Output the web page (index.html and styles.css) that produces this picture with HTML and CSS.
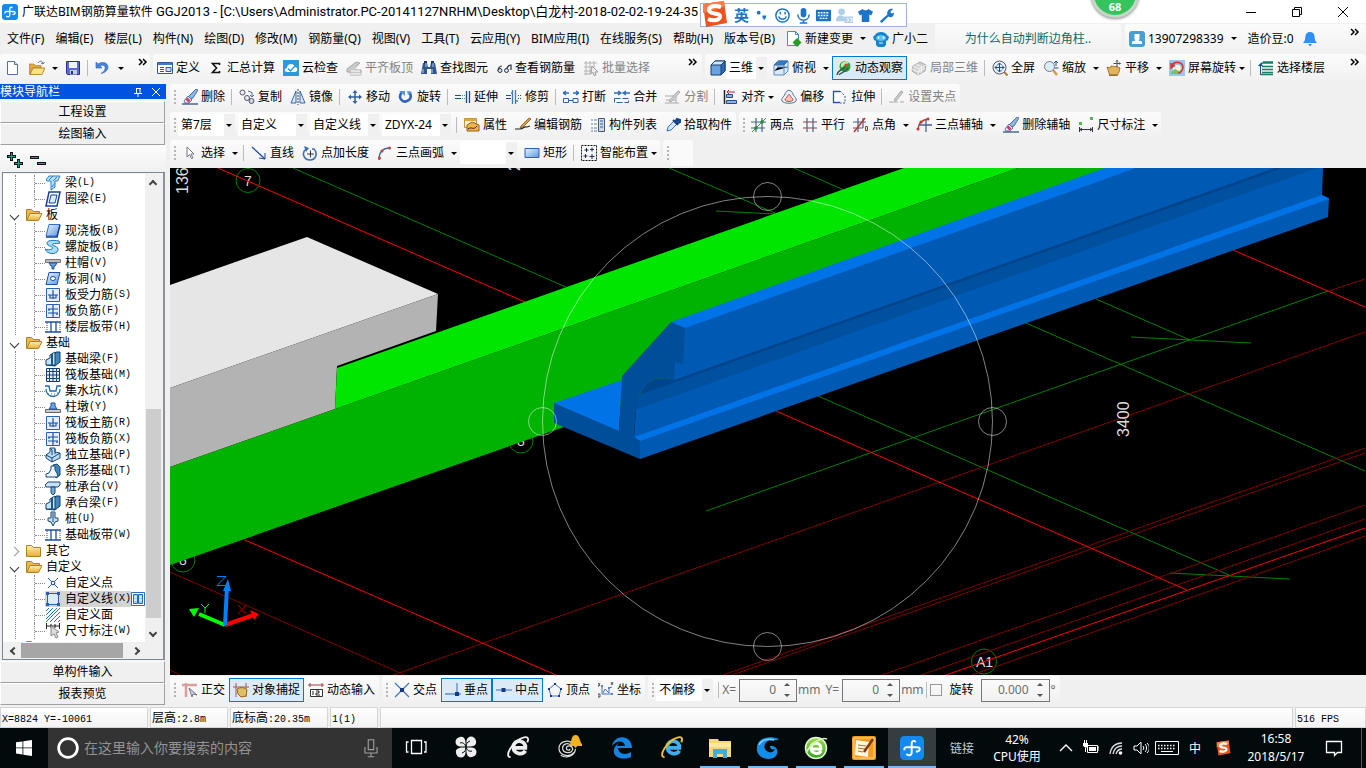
FILE: index.html
```html
<!DOCTYPE html>
<html lang="zh-CN">
<head>
<meta charset="utf-8">
<title>广联达BIM钢筋算量软件 GGJ2013</title>
<link rel="stylesheet" href="styles.css">
</head>
<body>
<svg class="defs" aria-hidden="true">
<defs>
<linearGradient id="gBlue" x1="0" y1="0" x2="1" y2="1"><stop offset="0" stop-color="#eaf6ff"/><stop offset="1" stop-color="#5f93e6"/></linearGradient>
<linearGradient id="gFold" x1="0" y1="0" x2="0" y2="1"><stop offset="0" stop-color="#fff0ae"/><stop offset="1" stop-color="#e6ac35"/></linearGradient>
<linearGradient id="gGreen" x1="0" y1="0" x2="0" y2="1"><stop offset="0" stop-color="#9be04a"/><stop offset="1" stop-color="#36a41c"/></linearGradient>
</defs>
<symbol id="app" viewBox="0 0 16 16"><rect width="16" height="16" rx="3" fill="#128af0"/><path d="M10.500 4C9 2.500 7.800 3.500 7.800 5v6c0 2-2.500 2.500-3.500 .800M3 9.500C2.500 8 3.500 7.500 4.500 7.500h7c2 0 2.300 2 .500 2.800M10.500 10.300h1.500" fill="none" stroke="#fff" stroke-width="1.300"/></symbol>
<symbol id="new" viewBox="0 0 16 16"><path d="M2.500 1.500h7l3 3v10h-10z" fill="#fff" stroke="#54719b"/><path d="M9.500 1.500v3h3" fill="#cfe0f5" stroke="#54719b"/></symbol>
<symbol id="open" viewBox="0 0 16 16"><path d="M0 4h5l1 1.500h6V8H3l-2 6H0z" fill="#e3aa3c" stroke="#a87416" stroke-width=".6"/><path d="M1 14.500L4 8h12l-3 6.500z" fill="#ffe08a" stroke="#a87416" stroke-width=".8"/><path d="M9 3c2-3 5-2 5 1M12 3l2 1 1.500-2" fill="none" stroke="#60718c"/></symbol>
<symbol id="save" viewBox="0 0 16 16"><path d="M1.500 1.500h13v13h-12l-1-1z" fill="#5d6ccb" stroke="#24318c"/><path d="M4 2h8v6H4z" fill="#eef2fd"/><path d="M5 10h7v4.500H5z" fill="#c5cbe0"/><path d="M6 11h2v3H6z" fill="#24318c"/></symbol>
<symbol id="undo" viewBox="0 0 16 16"><path d="M1 2v6h6L5 6c3-2 6 0 5 3-.500 2-2 3-4 4.500 5-1 7-4 7-6.500 0-4-5-6-10-3z" fill="#4a86d8" stroke="#2b5fae" stroke-width=".6"/></symbol>
<symbol id="define" viewBox="0 0 16 16"><path d="M.500 2.500h15v11H.500z" fill="#fff" stroke="#35599c"/><path d="M1 3h14v2H1z" fill="#4677c8"/><path d="M3 7.500h4M3 9.500h4M3 11.500h4M9 7.500h5v4H9z" stroke="#35599c" fill="#cddcf5"/></symbol>
<symbol id="sigma" viewBox="0 0 16 16"><path d="M11.500 5V3.500H4.500L8.500 8l-4 4.500h7V11" fill="none" stroke="#111" stroke-width="1.600"/></symbol>
<symbol id="cloud" viewBox="0 0 16 16"><rect width="16" height="16" fill="#2a9ada"/><path d="M4 12c-3 0-3-4 0-4 0-5 7-5 8-1 3 0 3 5 0 5z" fill="#fff"/><path d="M5 8.500l2.500 2.500L12 6" fill="none" stroke="#2a9ada" stroke-width="1.500"/></symbol>
<symbol id="flat" viewBox="0 0 16 16"><path d="M1 9l9-7 4 1-4 4v3h5v5H4v-3H1z" fill="#c9c9c9" stroke="#a9a9a9"/><path d="M3 14h12M5 11h9M9 8h6" stroke="#fff"/></symbol>
<symbol id="find" viewBox="0 0 16 16"><path d="M2 3h4l1 4h2l1-4h4l2 11h-6V9H6v5H0z" fill="#31568c"/><path d="M3 1h3v3H3zM10 1h3v3h-3z" fill="#1c3561"/><path d="M2 9v4M11 9v4M5 3v4M12 3v4" stroke="#b8d0f0"/></symbol>
<symbol id="glass" viewBox="0 0 16 16"><path d="M2 11c0-3 2-5 4-5M10 10c1-3 3-5 5-5v5" fill="none" stroke="#2d3340" stroke-width="1.200"/><circle cx="4" cy="10.500" r="2" fill="#d6e4f1" stroke="#2d3340"/><circle cx="10.500" cy="10.500" r="2" fill="#d6e4f1" stroke="#2d3340"/></symbol>
<symbol id="batch" viewBox="0 0 16 16"><path d="M1 3h13M1 7h9M1 11h7M1 14h6M3 1v14M7 1v14M11 1v7" stroke="#b3b3b3"/><path d="M9 6l6 6h-3l1 3-2 .500-1-3-2 1z" fill="#eee" stroke="#9d9d9d"/></symbol>
<symbol id="cube" viewBox="0 0 16 16"><path d="M1 5l4-4h10v10l-4 4H1z" fill="#6ba3de" stroke="#173f73"/><path d="M1 5l4-4h10l-4 4z" fill="#cfe6fb" stroke="#173f73"/><path d="M11 5l4-4v10l-4 4z" fill="#2d6cb0" stroke="#173f73"/></symbol>
<symbol id="cube2" viewBox="0 0 16 16"><path d="M1 5l4-4h10v10l-4 4H1z" fill="#d9ebfa" stroke="#5a8dc4"/><path d="M1 5l4-4h10l-4 4z" fill="#2e78c8" stroke="#3b6fa9"/><path d="M11 5v10M1 11l4-4h10M5 1v6" stroke="#5a8dc4"/></symbol>
<symbol id="orbit" viewBox="0 0 16 16"><circle cx="9" cy="6.500" r="5.500" fill="#2f9e3c"/><path d="M5 4c2-3 6-4 8-1-2 0-2 2-4 2s-1 3-4 2z" fill="#b7efb0"/><path d="M1 15c1-6 5-4 8-8M3 15c2-3 6-2 9-7" stroke="#3d4f4c" stroke-width="1.300" fill="none"/><circle cx="10" cy="5" r="1.500" fill="#e33"/></symbol>
<symbol id="local3d" viewBox="0 0 16 16"><path d="M2 6l7-4 6 3-1 6-7 4-6-4z" fill="#d0d0d0" stroke="#aaa"/><path d="M2 6l6 3 7-4M8 9l-1 6M5 4l6 3-1 6M1 9l6 3 7-4" stroke="#f5f5f5" fill="none"/></symbol>
<symbol id="full" viewBox="0 0 16 16"><circle cx="7.500" cy="7.500" r="6.500" fill="#e7f1fb" stroke="#557"/><path d="M3 7.500h9M7.500 3v9M5.500 5l2-2 2 2M5.500 10l2 2 2-2M5 5.500l-2 2 2 2M10 5.500l2 2-2 2" stroke="#1f4d92" fill="none"/><path d="M12 12l3.500 3.500" stroke="#b27a39" stroke-width="2"/></symbol>
<symbol id="zoomi" viewBox="0 0 16 16"><circle cx="6.500" cy="6.500" r="5" fill="#dcecf9" stroke="#778"/><path d="M10 10l4 5" stroke="#d39b49" stroke-width="2.500"/><path d="M13 1v5M11 3l2-2 2 2M11.500 8h4" stroke="#234f90" fill="none"/></symbol>
<symbol id="pan" viewBox="0 0 16 16"><path d="M1 7l3 1 1-2 7 1 2 1-1 4-2 4H4l-1-3z" fill="#e4b45c" stroke="#93621b" stroke-width=".8"/><path d="M3 15h8" stroke="#7b5417"/><path d="M11 0v7M7.500 3.500h7M10 1.500l1-1 1 1M13.500 2.500l1 1-1 1" stroke="#4b4f5a" fill="none"/></symbol>
<symbol id="srot" viewBox="0 0 16 16"><path d="M0 0h16v16H0z" fill="#94c9ee"/><path d="M4 5h6l2 3-2 4H4z" fill="#fbf6d8"/><path d="M2 12l4-3 4 2 2-1v4H2z" fill="#7cc05a"/><path d="M3 6c1-5 10-5 11 1 0 3-2 6-5 6M6 5L2 8V3" fill="none" stroke="#de3432" stroke-width="1.600"/></symbol>
<symbol id="floors" viewBox="0 0 16 16"><path d="M5 2h10M1 6l3-3h11M4 6.500h11M4 9.500h11M4 12.500h11M3 14.500h12" stroke="#1e7b68" stroke-width="1.500" fill="none"/><path d="M0 6h5L3 3z" fill="#264c8a"/><path d="M2.500 6v9" stroke="#264c8a"/></symbol>
<symbol id="brush" viewBox="0 0 16 16"><path d="M14 0l2 1-5 8-3 1-2-2z" fill="#8ab6e8" stroke="#345a92" stroke-width=".8"/><path d="M6 7l4 4-3 3H3L2 12z" fill="#f2e7ee" stroke="#345a92" stroke-width=".8"/><path d="M5.500 8.500l3 3-2 2-3-3z" fill="#c23f6b"/><path d="M0 15h16" stroke="#2f4f86" stroke-width="1.300"/></symbol>
<symbol id="copy" viewBox="0 0 16 16"><circle cx="3.500" cy="3.500" r="2.500" fill="#e9eef5" stroke="#556"/><circle cx="8" cy="9" r="2.500" fill="#e9eef5" stroke="#556"/><circle cx="12.500" cy="12" r="2.500" fill="#c8d5e6" stroke="#556"/><path d="M9 2l4 1.500v4M11 6l2 2 2-2" fill="none" stroke="#4d6b9c"/></symbol>
<symbol id="mirror" viewBox="0 0 16 16"><path d="M6 2v12H1zM10 2v12h5z" fill="#dce8f8" stroke="#3567ac"/><path d="M8 0v16" stroke="#345" stroke-dasharray="2 1"/></symbol>
<symbol id="move" viewBox="0 0 16 16"><path d="M2 8h12M8 2v12" stroke="#2f5f9d" stroke-width="1.500"/><path d="M8 1l2.500 3h-5zM8 15l2.500-3h-5zM1 8l3-2.500v5zM15 8l-3-2.500v5z" fill="#2f5f9d"/></symbol>
<symbol id="rotate" viewBox="0 0 16 16"><path d="M4 3c-5 6 1 11 5 9 4-1 5-6 2-9" fill="none" stroke="#2f65b4" stroke-width="2.600"/><path d="M1 2h6v5zM14 3l-5-1 1 4z" fill="#5c93dd"/></symbol>
<symbol id="extend" viewBox="0 0 16 16"><path d="M0 6.500h6M0 9.500h6" stroke="#234a84" stroke-width="1.200"/><path d="M7 6h1v1H7zM9 6h1v1H9zM7 9h1v1H7zM9 9h1v1H9z" fill="#3a6"/><path d="M11.500 2v12M14.500 2v12" stroke="#234a84" stroke-width="1.300"/></symbol>
<symbol id="trim" viewBox="0 0 16 16"><path d="M0 6.500h5M0 9.500h5M12 6.500h1M14 6.500h1M12 9.500h1M14 9.500h1" stroke="#234a84" stroke-width="1.200"/><path d="M6.500 1v14M9.500 1v14M5 4h2M10 12h2" stroke="#4779b8" stroke-width="1.300"/></symbol>
<symbol id="break" viewBox="0 0 16 16"><path d="M0 4h6M10 4h6M3 2L0 4l3 2M13 2l3 2-3 2" stroke="#2f6ab4" fill="none" stroke-width="1.300"/><path d="M.500 9.500h5v4h-5zM10 9.500h5v4h-5zM5 11.500h5" fill="#f3f7fc" stroke="#385f96"/></symbol>
<symbol id="merge" viewBox="0 0 16 16"><path d="M0 4h6M10 4h6M4 2l3 2-3 2M12 2L9 4l3 2" stroke="#2f6ab4" fill="none" stroke-width="1.300"/><path d="M.500 9.500h14v4H.500z" fill="#f3f7fc" stroke="#385f96" stroke-dasharray="6 2"/></symbol>
<symbol id="split" viewBox="0 0 16 16"><path d="M0 7h9M0 14h14M11 6v8M1 11h10" stroke="#aaa"/><path d="M4 12l9-10 2 1-9 10z" fill="#d0d0d0" stroke="#aaa"/></symbol>
<symbol id="align" viewBox="0 0 16 16"><path d="M2.500 1v14" stroke="#222" stroke-width="1.500"/><path d="M4.500 5.500h6v3h-6zM4.500 11.500h10v3h-10z" fill="#8db4e6" stroke="#244b91"/><path d="M5 3h8M7 1L5 3l2 2" stroke="#b32044" fill="none"/></symbol>
<symbol id="offset" viewBox="0 0 16 16"><path d="M1 12c-1-3 2-4 3-7 2-5 6-5 8 0 1 3 4 4 3 7-2 3-12 3-14 0z" fill="#eef3fa" stroke="#56719d"/><path d="M4 11c0-2 2-2 2.500-4 1-2 2-2 3 0 .500 2 2.500 2 2.500 4-1 2-7 2-8 0z" fill="#f4c6bd" stroke="#c54c40"/></symbol>
<symbol id="stretch" viewBox="0 0 16 16"><path d="M8 2.500H1.500v11H8" fill="#fff" stroke="#2c5797" stroke-width="1.300"/><path d="M8 2l5 5v7H8" fill="none" stroke="#2c5797" stroke-dasharray="2 1.500"/></symbol>
<symbol id="grippt" viewBox="0 0 16 16"><path d="M0 13h9M11 13h4M5 11l7-9 2 1-7 9z" stroke="#aaa" fill="#ccc"/></symbol>
<symbol id="prop" viewBox="0 0 16 16"><path d="M.500 1.500h12v9H.500z" fill="#fff3d4" stroke="#c9923d"/><path d="M1 2h11v2H1z" fill="#e4a43e"/><path d="M3 8l5-3 7 3v6H3z" fill="#f1b544" stroke="#925f15"/><path d="M4 12c4-3 5 2 9-3" stroke="#314" fill="none"/></symbol>
<symbol id="editbar" viewBox="0 0 16 16"><path d="M0 12h5c4 0 3-3 7-2l3-1" fill="none" stroke="#222" stroke-width="1.200"/><path d="M6 9l8-8 2 1-8 8-3 1z" fill="#d99a42" stroke="#7a4c12" stroke-width=".7"/></symbol>
<symbol id="list" viewBox="0 0 16 16"><path d="M1 3h2M4 3h3M1 7h2M4 7h3M1 11h2M4 11h3M1 14h2M4 14h3" stroke="#5a7fb5"/><path d="M8.500 1.500h6v13h-6z" fill="#c9daf2" stroke="#555"/><path d="M10 4h3M10 7h3M10 10h3" stroke="#2c5ca8"/></symbol>
<symbol id="pick" viewBox="0 0 16 16"><path d="M2 14l1-4 6-6 3 3-6 6z" fill="#d5e8fb" stroke="#3a6eb3"/><path d="M8 3l5 5M10 5l2-3 3 1v2l-3 2" stroke="#173f86" stroke-width="2" fill="#234f9d"/></symbol>
<symbol id="twopt" viewBox="0 0 16 16"><path d="M0 5h15M0 11h14M5 1v14M11 1v14" stroke="#47638c" stroke-width="1.200"/><path d="M1 15L15 1" stroke="#3f993b"/><circle cx="11" cy="5" r="1.700" fill="#1e8a2d"/><circle cx="5" cy="11" r="1.700" fill="#1e8a2d"/></symbol>
<symbol id="para" viewBox="0 0 16 16"><path d="M1 5h14M1 11h14" stroke="#993a41"/><path d="M5 1v14M11 1v14" stroke="#47638c" stroke-width="1.200"/></symbol>
<symbol id="angle" viewBox="0 0 16 16"><path d="M0 5h13M0 11h10M5 1v14M10 1v10" stroke="#47638c" stroke-width="1.200"/><path d="M1 15L12 1" stroke="#c43434" stroke-width="1.500"/><path d="M12.500 9.500h2v4h-2z" stroke="#d12020" fill="none"/></symbol>
<symbol id="axis3" viewBox="0 0 16 16"><path d="M2 13c0-6 3-10 10-11" fill="none" stroke="#c43434" stroke-width="1.300"/><path d="M3 8h13M10 3v12" stroke="#47638c" stroke-width="1.300"/><circle cx="2" cy="12" r="1.500" fill="#c43434"/><circle cx="5" cy="5" r="1.500" fill="#c43434"/><circle cx="12" cy="2" r="1.500" fill="#c43434"/></symbol>
<symbol id="dim" viewBox="0 0 16 16"><path d="M1 5h3v3H1zM12 0h3v3h-3z" fill="#55b355"/><path d="M1.500 10v5M14.500 10v5M2 12.500h12M4 11l-2 1.500L4 14M12 11l2 1.500-2 1.500" stroke="#334" fill="none"/></symbol>
<symbol id="cursor" viewBox="0 0 16 16"><path d="M5 2v10l2.500-2.500 2 4 1.500-.500-2-4h3z" fill="#fff" stroke="#778"/></symbol>
<symbol id="line" viewBox="0 0 16 16"><path d="M1 2l13 12" stroke="#1d4d9a" stroke-width="1.300"/><path d="M14 14l-6-1M14 14V8" stroke="#1d4d9a"/></symbol>
<symbol id="ptlen" viewBox="0 0 16 16"><path d="M4 4C-1 8 2 15 8 15s8-7 4-11h-2" fill="none" stroke="#3d6eaf" stroke-width="1.600"/><path d="M5 9h7M8.500 5.500v7" stroke="#334"/><path d="M2 1l5 2-3 4z" fill="#3d6eaf"/></symbol>
<symbol id="arc" viewBox="0 0 16 16"><path d="M2 15C2 7 6 3 13 3" fill="none" stroke="#3d6eaf" stroke-width="1.400"/><circle cx="2.500" cy="13" r="1.600" fill="#c74635"/><circle cx="5" cy="6" r="1.600" fill="#c74635"/><circle cx="12.500" cy="3" r="1.600" fill="#c74635"/></symbol>
<symbol id="rectm" viewBox="0 0 16 16"><path d="M1 3.500h14v9H1z" fill="url(#gBlue)" stroke="#2d5fc0"/></symbol>
<symbol id="smart" viewBox="0 0 16 16"><path d="M.500 .500h15v15H.500z" fill="none" stroke="#111" stroke-dasharray="2 1"/><path d="M5.500 3v4M3.500 5h4M11 2.500v4M9 4.500h4M4.500 9v4M2.500 11h4M11 9v5M8.500 11.500h5" stroke="#1f2d55"/></symbol>
<symbol id="ortho" viewBox="0 0 16 16"><path d="M0 3h15M4 1v14" stroke="#d9a09d" stroke-width="2.500"/><path d="M7 6l8 7-4-1-1 3z" fill="#c8d4e5" stroke="#778"/></symbol>
<symbol id="snap" viewBox="0 0 16 16"><path d="M0 5h16M3 1v14M13 1v14" stroke="#a55"/><path d="M4 7c3-2 8-2 10 1l-1 6-5 1-3-3z" fill="#e2bd62" stroke="#8b6a28"/></symbol>
<symbol id="dyn" viewBox="0 0 16 16"><path d="M0 3h16M2 1v4M14 1v4" stroke="#944"/><path d="M2.500 7.500h12v7h-12z" fill="#fff" stroke="#333"/><path d="M5 9v4M8 9h3v2H8v2h4" stroke="#222" fill="none"/></symbol>
<symbol id="cross" viewBox="0 0 16 16"><path d="M1 1l14 14M15 1L1 15" stroke="#3f73bf" stroke-width="1.200"/><path d="M6 6h4v4H6z" fill="#12398c"/></symbol>
<symbol id="perp" viewBox="0 0 16 16"><path d="M0 12h16M12 1v13" stroke="#5a8ccd" stroke-width="1.300"/><path d="M10 10h4v4h-4z" fill="#12398c"/></symbol>
<symbol id="mid" viewBox="0 0 16 16"><path d="M0 8h16" stroke="#5a8ccd" stroke-width="1.300"/><path d="M5.500 6h4v4h-4z" fill="#12398c"/></symbol>
<symbol id="vertex" viewBox="0 0 16 16"><path d="M8 2l6 5-2 7H4L2 7z" fill="none" stroke="#3f73bf"/><path d="M7 1h2v2H7zM13 6h2v2h-2zM1 6h2v2H1zM3 13h2v2H3zM11 13h2v2h-2z" fill="#12398c"/></symbol>
<symbol id="coord" viewBox="0 0 16 16"><path d="M4 4v8h10M5 11l2-4 4 4V6l3-1" stroke="#3f73bf" fill="none"/><path d="M3 3h2v2H3zM10 5h2v2h-2zM13 11h2v2h-2z" fill="#5b83c4"/><path d="M0 1l2 3M2 1L0 5M13 0l2 3M15 0l-2 3M0 12h2v3H0z" stroke="#333" stroke-width=".8" fill="none"/></symbol>
<symbol id="fold" viewBox="0 0 16 16"><path d="M.500 2.500h5l2 2h7v9H.500z" fill="url(#gFold)" stroke="#ae8222"/></symbol>
<symbol id="foldo" viewBox="0 0 16 16"><path d="M.500 13V2.500h5l2 2h6V7" fill="#e9b84d" stroke="#ae8222"/><path d="M.500 13.500L4 6.500h12l-3.500 7z" fill="url(#gFold)" stroke="#ae8222"/></symbol>
<symbol id="beam" viewBox="0 0 16 16"><path d="M1 5l3-4h11l-2 4v1h-3v6l-4 3V6H2z" fill="#b9e1fa" stroke="#2681c9"/><path d="M4 5l4-4M8 6l4-4M7 12l3-4" stroke="#2681c9"/></symbol>
<symbol id="ring" viewBox="0 0 16 16"><path d="M4 1h11l-3 14H1z" fill="#fff" stroke="#173f9b" stroke-width="1.500"/><path d="M6 4h6l-2 8H4z" fill="#dcecff" stroke="#173f9b"/></symbol>
<symbol id="slab" viewBox="0 0 16 16"><path d="M4 1.500h11L12 13H1z" fill="url(#gBlue)" stroke="#2e6fc5"/><path d="M1 14h11l3-12" fill="none" stroke="#173f9b" stroke-width="1.500"/></symbol>
<symbol id="spiral" viewBox="0 0 16 16"><path d="M14 2C4 0 0 3 3 6c3 2 6 2 4 4-2 1-5 1-7 0 3 7 14 5 13 0-1-4-8-3-5-5 1-1 5 0 7-1z" fill="#a6def8" stroke="#1b76b9"/></symbol>
<symbol id="cap" viewBox="0 0 16 16"><path d="M.500 4.500h15v3H.500z" fill="#bbb" stroke="#777"/><path d="M4 8h8l-2 3H9v3H7v-3H6z" fill="#6ea6e6" stroke="#1c4da0"/></symbol>
<symbol id="hole" viewBox="0 0 16 16"><path d="M4 1.500h11l-3 12H1z" fill="url(#gBlue)" stroke="#1d4da8"/><ellipse cx="8" cy="7.500" rx="2.500" ry="2" fill="#fff" stroke="#1d4da8"/></symbol>
<symbol id="bars" viewBox="0 0 16 16"><path d="M1.500 1.500h13v13h-13z" fill="#e5effd" stroke="#2b5eb8"/><path d="M3 8h10M8 3v9M5 8v3h6V8" stroke="#1d4da8" stroke-width="1.200" fill="none"/></symbol>
<symbol id="nbars" viewBox="0 0 16 16"><path d="M1.500 1.500h13v13h-13z" fill="#e5effd" stroke="#2b5eb8"/><path d="M3 6h10M3 10h10M8 2v12M4 6v2M12 10v2" stroke="#1d4da8" stroke-width="1.200"/></symbol>
<symbol id="strip" viewBox="0 0 16 16"><path d="M0 3h16M0 13h16" stroke="#1d4da8" stroke-width="1.300"/><path d="M6 3v10M11 3v10" stroke="#1d4da8" stroke-width="1.300"/><path d="M2 4v9M15 4v9" stroke="#446" stroke-dasharray="1 1"/></symbol>
<symbol id="fbeam" viewBox="0 0 16 16"><path d="M1 14l3-5 7-8h4v10l-5 4z" fill="#4087bd" stroke="#103c6f"/><path d="M1 14V9l4-2V4l5-3v13z" fill="#c5e5f9" stroke="#103c6f"/><path d="M7 3v11" stroke="#17598e" stroke-width="2"/></symbol>
<symbol id="raft" viewBox="0 0 16 16"><path d="M1.500 1.500h13v13h-13zM4.500 4.500h7v7h-7z" fill="#e8f1fc" stroke="#123d75"/><path d="M4.500 1v3M8 1v14M11.500 1v3M1 8h14M4.500 12v3M11.500 12v3M1 4.500h3M12 4.500h3M1 11.500h3M12 11.500h3" stroke="#123d75"/></symbol>
<symbol id="pit" viewBox="0 0 16 16"><path d="M0 3h4l1 5h6l1-5h4M1 6c0 10 14 10 14 0" fill="none" stroke="#1e67ad" stroke-width="1.300"/><path d="M3 11h1M6 11h1M9 11h1M12 10h1M5 13h1M9 13h1" stroke="#1e67ad"/></symbol>
<symbol id="pier" viewBox="0 0 16 16"><path d="M.500 10.500h15v3H.500z" fill="#ccc" stroke="#666"/><path d="M4 10l2-3V4h4v3l2 3z" fill="#6ea6e6" stroke="#1c4da0"/></symbol>
<symbol id="indep" viewBox="0 0 16 16"><path d="M1 8l4-3V1h5v4l5 1v5l-8 4-6-4z" fill="#b9dbf4" stroke="#184675"/><path d="M1 8l6 3 8-5M7 11v4M5 1l2 2v5M10 2v5" stroke="#184675" fill="none"/></symbol>
<symbol id="stripf" viewBox="0 0 16 16"><path d="M8 2l4-1 3 3v8l-4 3z" fill="#4087bd" stroke="#184675"/><path d="M1 14v-3l3-1 2-4V3h4v4l2 3 1 4z" fill="#eef7ff" stroke="#184675"/></symbol>
<symbol id="pcap" viewBox="0 0 16 16"><path d="M0 6l3-3h12v3l-2 2H1z" fill="#c7e2f8" stroke="#184675"/><path d="M6 8h4v6l-2 2-2-2z" fill="#72aad8" stroke="#184675"/></symbol>
<symbol id="pile" viewBox="0 0 16 16"><path d="M6 1h4v6h3v3l-3 1-2 4-2-4-3-1V7h3z" fill="#c7e2f8" stroke="#184675"/><path d="M8 2v9" stroke="#184675"/></symbol>
<symbol id="upoint" viewBox="0 0 16 16"><path d="M3 3l10 10M13 3L3 13" stroke="#2b68c5"/><circle cx="8" cy="8" r="1.800" fill="#fff" stroke="#14429a"/></symbol>
<symbol id="uline" viewBox="0 0 16 16"><path d="M2.500 2.500h11v11h-11z" fill="#dfe9f7" stroke="#2360b4"/><path d="M1 1h3v3H1zM12 1h3v3h-3zM1 12h3v3H1zM12 12h3v3h-3z" fill="#2360b4"/></symbol>
<symbol id="uface" viewBox="0 0 16 16"><path d="M1 4l3-3M1 8l7-7M1 12l11-11M1 15L15 1M5 15L15 5M9 15l6-6M13 15l2-2" stroke="#2371c4"/></symbol>
<symbol id="dimw" viewBox="0 0 16 16"><path d="M1.500 0v6M14.500 0v6M2 3h12M6 1v4M10 1v4" stroke="#222"/><path d="M6 3v10l3-2 2 4 2-1-2-4 3-1z" fill="#ddd" stroke="#888"/></symbol>
<symbol id="book" viewBox="0 0 14 16"><path d="M.500 1.500h13v13H.500z" fill="#fff" stroke="#2e6bb4"/><path d="M2.500 3.500h4v9h-4zM7.500 3.500h4v9h-4z" fill="#9cd5fa" stroke="#1670bd"/><path d="M3 6h3M3 9h3M8 6h3M8 9h3" stroke="#fff"/></symbol>
<symbol id="more" viewBox="0 0 10 8"><path d="M1 1l3 3-3 3M5 1l3 3-3 3" fill="none" stroke="#000" stroke-width="1.500"/></symbol>
<symbol id="change" viewBox="0 0 16 16"><path d="M1.500 .500h8l3 3v11h-11z" fill="#fff" stroke="#3e91bd"/><path d="M9.500 .500v3h3" fill="none" stroke="#3e91bd"/><path d="M11 7l4.500 4.500L11 16l-4.500-4.500z" fill="#2d9a28"/></symbol>
<symbol id="mascot" viewBox="0 0 16 16"><path d="M2 4c2-4 10-4 12 0l2 2-1 3-2 1v4l-2 2H5l-2-2v-4L1 9 0 6z" fill="#1684cc"/><ellipse cx="8" cy="7" rx="5" ry="3" fill="#5fc3f2"/><path d="M5.500 5.500v2M10.500 5.500v2" stroke="#fff" stroke-width="1.600"/><path d="M6 12h4" stroke="#9adcfa" stroke-width="1.400"/></symbol>
<symbol id="user" viewBox="0 0 16 16"><rect width="16" height="16" rx="3" fill="#4b9ed2"/><path d="M5.500 3h5v5l-1 1.500 3.500 1V13H3v-2.500l3.500-1-1-1.500z" fill="#fff"/></symbol>
<symbol id="bell" viewBox="0 0 16 16"><path d="M8 1c6 0 4 7 5.500 9l1.500 2H1l1.500-2C4 8 2 1 8 1zM6 13h4l-2 2.500z" fill="#2f90f5"/></symbol>
<symbol id="sogou" viewBox="0 0 28 28"><path d="M3 4L24 1l3 22-21 4z" fill="#f0511d"/><path d="M3 4L24 1l.500 6L3 13z" fill="#ff7a44"/><path d="M21 7c-6-2-12-1-12 3 0 5 12 2 11 7-1 4-8 4-12 2" fill="none" stroke="#fff" stroke-width="4"/></symbol>
<symbol id="ie" viewBox="0 0 26 26"><path d="M21 17c-3 5-13 4-13-4 0-9 14-8 13 1H9" fill="none" stroke="currentColor" stroke-width="4"/><path d="M5 24C-3 24 8 6 18 3c6-2 7 1 5 5" fill="none" stroke="var(--swoosh)" stroke-width="2"/></symbol>
</svg>

<header class="titlebar">
  <svg class="i"><use href="#app"/></svg>
  <h1>广联达BIM钢筋算量软件 <span>GGJ2013 - [C:\Users\Administrator.PC-20141127NRHM\Desktop\白龙村-2018-02-02-19-24-35</span></h1>
  <div class="winctl">
    <button aria-label="最小化"><svg viewBox="0 0 12 12"><path d="M1 6.500h10"/></svg></button>
    <button aria-label="还原"><svg viewBox="0 0 12 12"><path d="M1.500 3.500h7v7h-7zM3.500 3V1.500h7v7H9"/></svg></button>
    <button aria-label="关闭"><svg viewBox="0 0 12 12"><path d="M1 1l10 10M11 1L1 11"/></svg></button>
  </div>
  <div class="ime">
    <svg class="ime-logo"><use href="#sogou"/></svg>
    <b>英</b>
    <svg viewBox="0 0 18 18"><circle cx="6" cy="6" r="2"/><path d="M10 9h4c0 3-1 4-3 5 1-2 0-2-1-2z"/></svg>
    <svg viewBox="0 0 18 18"><circle cx="9" cy="9" r="7" fill="none" stroke="#1c74c6" stroke-width="1.600"/><path d="M6 5h1.500v3H6zM11 5h1.500v3H11z"/><path d="M5 10c1 4 7 4 8 0" fill="none" stroke="#1c74c6" stroke-width="1.500"/></svg>
    <svg viewBox="0 0 18 18"><rect x="6" y="1" width="6" height="10" rx="3"/><path d="M3 8c0 8 12 8 12 0M9 14v3M5 17h8" fill="none" stroke="#1c74c6" stroke-width="1.600"/></svg>
    <svg viewBox="0 0 18 18"><rect x="1" y="3" width="16" height="12" rx="1"/><path d="M3 6h12M3 9h12M5 12h8" stroke="#fff" stroke-dasharray="2 1" stroke-width="1.500"/></svg>
    <svg class="faded" viewBox="0 0 18 18"><circle cx="6" cy="5" r="3.500"/><path d="M0 15c0-7 7-7 9-4v4zM9 10h9v7H9z"/><path d="M11 12h2v3h-2M15 12h2v3h-2" stroke="#fff" fill="none"/></svg>
    <svg viewBox="0 0 18 18"><path d="M1 5l5-3c1 2 5 2 6 0l5 3-2 4-2-1v8H5V8L3 9z"/></svg>
    <svg viewBox="0 0 18 18"><path d="M2 15l8-7c-1-4 2-7 6-6l-3 3 1 2 3-1c0 4-3 6-6 4l-7 7z"/></svg>
  </div>
  <div class="ball">68</div>
</header>

<nav class="menubar">
  <button>文件(F)</button><button>编辑(E)</button><button>楼层(L)</button><button>构件(N)</button><button>绘图(D)</button><button>修改(M)</button><button>钢筋量(Q)</button><button>视图(V)</button><button>工具(T)</button><button>云应用(Y)</button><button>BIM应用(I)</button><button>在线服务(S)</button><button>帮助(H)</button><button>版本号(B)</button>
  <button class="it change"><svg class="i"><use href="#change"/></svg>新建变更<i class="dd wide"></i></button>
  <button class="it"><svg class="i"><use href="#mascot"/></svg>广小二</button>
  <div class="group tip"><a href="#tip">为什么自动判断边角柱..</a></div>
  <div class="group account">
    <button class="it"><svg class="i"><use href="#user"/></svg>13907298339<i class="dd wide"></i></button>
    <span>造价豆:0</span>
    <svg class="i"><use href="#bell"/></svg>
    <svg class="more"><use href="#more"/></svg>
  </div>
</nav>

<div class="row main-tools">
  <div class="group files">
    <button class="it" aria-label="新建"><svg class="i"><use href="#new"/></svg></button>
    <button class="it" aria-label="打开"><svg class="i"><use href="#open"/></svg><i class="dd wide"></i></button>
    <button class="it" aria-label="保存"><svg class="i"><use href="#save"/></svg></button>
    <i class="sep"></i>
    <button class="it" aria-label="撤销"><svg class="i"><use href="#undo"/></svg><i class="dd wide"></i></button>
    <svg class="more"><use href="#more"/></svg>
  </div>
  <div class="group general">
    <button class="it"><svg class="i"><use href="#define"/></svg>定义</button>
    <button class="it"><svg class="i"><use href="#sigma"/></svg>汇总计算</button>
    <button class="it"><svg class="i"><use href="#cloud"/></svg>云检查</button>
    <button class="it" disabled><svg class="i"><use href="#flat"/></svg>平齐板顶</button>
    <button class="it"><svg class="i"><use href="#find"/></svg>查找图元</button>
    <button class="it"><svg class="i"><use href="#glass"/></svg>查看钢筋量</button>
    <button class="it" disabled><svg class="i"><use href="#batch"/></svg>批量选择</button>
    <svg class="more"><use href="#more"/></svg>
  </div>
  <div class="group view">
    <svg class="i"><use href="#cube"/></svg>
    <label class="combo w3"><select aria-label="视图模式"><option>三维</option></select></label>
    <button class="it"><svg class="i"><use href="#cube2"/></svg>俯视<i class="dd wide"></i></button>
    <button class="it on"><svg class="i"><use href="#orbit"/></svg>动态观察</button>
    <button class="it" disabled><svg class="i"><use href="#local3d"/></svg>局部三维</button>
    <i class="sep"></i>
    <button class="it"><svg class="i"><use href="#full"/></svg>全屏</button>
    <button class="it"><svg class="i"><use href="#zoomi"/></svg>缩放<i class="dd wide"></i></button>
    <button class="it"><svg class="i"><use href="#pan"/></svg>平移<i class="dd wide"></i></button>
    <button class="it"><svg class="i"><use href="#srot"/></svg>屏幕旋转<i class="dd"></i></button>
    <i class="sep"></i>
    <button class="it"><svg class="i"><use href="#floors"/></svg>选择楼层</button>
    <svg class="more"><use href="#more"/></svg>
  </div>
</div>

<main class="work">
  <aside class="side">
    <h2>模块导航栏
      <svg viewBox="0 0 10 10"><path d="M3 1.500h5M3.500 1v5M7 1v5M1 6.500h8M5 7v3"/></svg>
      <svg viewBox="0 0 10 10"><path d="M1 1l8 8M9 1L1 9"/></svg>
    </h2>
    <button class="nav">工程设置</button>
    <button class="nav">绘图输入</button>
    <div class="treetools">
      <button aria-label="全部展开"><svg viewBox="0 0 16 16"><path d="M4.500 0v9M0 4.500h9M11.500 7v9M7 11.500h9" stroke="#111" stroke-width="3"/><path d="M4.500 1v7M1 4.500h7M11.500 8v7M8 11.500h7" stroke="#14a08c" stroke-width="1.200"/></svg></button>
      <button aria-label="全部折叠"><svg viewBox="0 0 16 16"><path d="M0 5.500h9M7 11.500h9" stroke="#111" stroke-width="3"/><path d="M1 5.500h7M8 11.500h7" stroke="#14a08c" stroke-width="1.200"/></svg></button>
    </div>
    <div class="treebox">
      <ul class="tree">
        <li><ul>
          <li><svg class="i"><use href="#beam"/></svg>梁<tt>(L)</tt></li>
          <li><svg class="i"><use href="#ring"/></svg>圈梁<tt>(E)</tt></li>
        </ul></li>
        <li><div class="node"><i class="exp open"></i><svg class="i"><use href="#foldo"/></svg>板</div><ul>
          <li><svg class="i"><use href="#slab"/></svg>现浇板<tt>(B)</tt></li>
          <li><svg class="i"><use href="#spiral"/></svg>螺旋板<tt>(B)</tt></li>
          <li><svg class="i"><use href="#cap"/></svg>柱帽<tt>(V)</tt></li>
          <li><svg class="i"><use href="#hole"/></svg>板洞<tt>(N)</tt></li>
          <li><svg class="i"><use href="#bars"/></svg>板受力筋<tt>(S)</tt></li>
          <li><svg class="i"><use href="#nbars"/></svg>板负筋<tt>(F)</tt></li>
          <li><svg class="i"><use href="#strip"/></svg>楼层板带<tt>(H)</tt></li>
        </ul></li>
        <li><div class="node"><i class="exp open"></i><svg class="i"><use href="#foldo"/></svg>基础</div><ul>
          <li><svg class="i"><use href="#fbeam"/></svg>基础梁<tt>(F)</tt></li>
          <li><svg class="i"><use href="#raft"/></svg>筏板基础<tt>(M)</tt></li>
          <li><svg class="i"><use href="#pit"/></svg>集水坑<tt>(K)</tt></li>
          <li><svg class="i"><use href="#pier"/></svg>柱墩<tt>(Y)</tt></li>
          <li><svg class="i"><use href="#bars"/></svg>筏板主筋<tt>(R)</tt></li>
          <li><svg class="i"><use href="#nbars"/></svg>筏板负筋<tt>(X)</tt></li>
          <li><svg class="i"><use href="#indep"/></svg>独立基础<tt>(P)</tt></li>
          <li><svg class="i"><use href="#stripf"/></svg>条形基础<tt>(T)</tt></li>
          <li><svg class="i"><use href="#pcap"/></svg>桩承台<tt>(V)</tt></li>
          <li><svg class="i"><use href="#fbeam"/></svg>承台梁<tt>(F)</tt></li>
          <li><svg class="i"><use href="#pile"/></svg>桩<tt>(U)</tt></li>
          <li><svg class="i"><use href="#strip"/></svg>基础板带<tt>(W)</tt></li>
        </ul></li>
        <li><div class="node"><i class="exp"></i><svg class="i"><use href="#fold"/></svg>其它</div></li>
        <li><div class="node"><i class="exp open"></i><svg class="i"><use href="#foldo"/></svg>自定义</div><ul>
          <li><svg class="i"><use href="#upoint"/></svg>自定义点</li>
          <li class="sel"><span><svg class="i"><use href="#uline"/></svg>自定义线<tt>(X)</tt></span><svg class="i book"><use href="#book"/></svg></li>
          <li><svg class="i"><use href="#uface"/></svg>自定义面</li>
          <li><svg class="i"><use href="#dimw"/></svg>尺寸标注<tt>(W)</tt></li>
        </ul></li>
        <li><div class="node"><i class="exp"></i><svg class="i"><use href="#fold"/></svg></div></li>
      </ul>
      <div class="vbar"><i class="up"></i><b></b><i class="down"></i></div>
      <div class="hbar"><i class="left"></i><b></b><i class="right"></i></div>
    </div>
    <button class="nav">单构件输入</button>
    <button class="nav">报表预览</button>
  </aside>

  <section class="stage">
    <div class="bars">
      <div class="row">
        <div class="group"><i class="grip"></i>
          <button class="it"><svg class="i"><use href="#brush"/></svg>删除</button><i class="sep"></i>
          <button class="it"><svg class="i"><use href="#copy"/></svg>复制</button>
          <button class="it"><svg class="i"><use href="#mirror"/></svg>镜像</button><i class="sep"></i>
          <button class="it"><svg class="i"><use href="#move"/></svg>移动</button>
          <button class="it"><svg class="i"><use href="#rotate"/></svg>旋转</button><i class="sep"></i>
          <button class="it"><svg class="i"><use href="#extend"/></svg>延伸</button>
          <button class="it"><svg class="i"><use href="#trim"/></svg>修剪</button><i class="sep"></i>
          <button class="it"><svg class="i"><use href="#break"/></svg>打断</button>
          <button class="it"><svg class="i"><use href="#merge"/></svg>合并</button>
          <button class="it" disabled><svg class="i"><use href="#split"/></svg>分割</button><i class="sep"></i>
          <button class="it"><svg class="i"><use href="#align"/></svg>对齐<i class="dd"></i></button>
          <button class="it"><svg class="i"><use href="#offset"/></svg>偏移</button>
          <button class="it"><svg class="i"><use href="#stretch"/></svg>拉伸</button><i class="sep"></i>
          <button class="it" disabled><svg class="i"><use href="#grippt"/></svg>设置夹点</button>
        </div>
      </div>
      <div class="row">
        <div class="group"><i class="grip"></i>
          <label class="combo w1"><select aria-label="楼层"><option>第7层</option></select></label>
          <label class="combo w2"><select aria-label="构件类别"><option>自定义</option></select></label>
          <label class="combo w2"><select aria-label="构件类型"><option>自定义线</option></select></label>
          <label class="combo w2"><select aria-label="构件名称"><option>ZDYX-24</option></select></label>
          <i class="sep"></i>
          <button class="it"><svg class="i"><use href="#prop"/></svg>属性</button>
          <button class="it"><svg class="i"><use href="#editbar"/></svg>编辑钢筋</button>
          <button class="it"><svg class="i"><use href="#list"/></svg>构件列表</button>
          <button class="it"><svg class="i"><use href="#pick"/></svg>拾取构件</button>
        </div>
        <div class="group"><i class="grip"></i>
          <button class="it"><svg class="i"><use href="#twopt"/></svg>两点</button>
          <button class="it"><svg class="i"><use href="#para"/></svg>平行</button>
          <button class="it"><svg class="i"><use href="#angle"/></svg>点角<i class="dd wide"></i></button>
          <button class="it"><svg class="i"><use href="#axis3"/></svg>三点辅轴<i class="dd wide"></i></button>
          <button class="it"><svg class="i"><use href="#brush"/></svg>删除辅轴</button>
          <button class="it"><svg class="i"><use href="#dim"/></svg>尺寸标注<i class="dd wide"></i></button>
        </div>
      </div>
      <div class="row">
        <div class="group"><i class="grip"></i>
          <button class="it"><svg class="i"><use href="#cursor"/></svg>选择<i class="dd wide"></i></button><i class="sep"></i>
          <button class="it"><svg class="i"><use href="#line"/></svg>直线</button>
          <button class="it"><svg class="i"><use href="#ptlen"/></svg>点加长度</button>
          <button class="it"><svg class="i"><use href="#arc"/></svg>三点画弧<i class="dd wide"></i></button>
          <label class="combo w1"><select aria-label="画弧方式"><option></option></select></label>
          <button class="it"><svg class="i"><use href="#rectm"/></svg>矩形</button><i class="sep"></i>
          <button class="it"><svg class="i"><use href="#smart"/></svg>智能布置<i class="dd"></i></button>
        </div>
        <div class="group"><i class="grip"></i><span class="blank"></span></div>
      </div>
    </div>

    <svg class="canvas" viewBox="170 168 1196 507" preserveAspectRatio="xMinYMin slice" role="img" aria-label="三维视图">
      <g fill="none" stroke="#008000">
        <path d="M293 168L566 287M669 168l106 45M716 211l59 3M794 168l50 22M1328 291L706 511M1096 299l94 41M1131 337l120 6M1026 323l339 148M818 396l411 179M1170 573l120 6"/>
        <circle cx="248" cy="180.500" r="12"/><circle cx="521" cy="441" r="12"/><circle cx="183" cy="560" r="12"/><circle cx="984" cy="661.500" r="12.500"/>
      </g>
      <path d="M170 572l235 103M170 670l10 5M393 675L1365 332M723 675L1365 448M732 675L1365 453M882 675L1365 505M921 675L1365 519M972 675L1365 536M1329 291l36-12" fill="none" stroke="#800000"/>
      <g class="cadtext">
        <text x="244" y="186" class="small">7</text>
        <text x="517" y="446" class="small">8</text>
        <text x="179" y="565" class="small">8</text>
        <text x="976" y="667" class="small">A1</text>
        <text transform="translate(188 194) rotate(-90)">136</text>
        <text transform="translate(1129 437) rotate(-90)">3400</text>
        <text transform="translate(520 171) rotate(-90)">2</text>
      </g>
      <path d="M218 168L525 302M776 411l411 179M245 540l311 135M946 675L1365 528M1233 250l132 57" fill="none" stroke="#f00"/>
      <path d="M170 285L307 237l131 57L170 388z" fill="#e6e6e6"/>
      <path d="M170 388l268-94-2 37-99 35-2 43-165 58z" fill="#b3b3b3"/>
      <path d="M337 368L904 168h114L335 409z" fill="#00e600"/>
      <path d="M170 467l165-58L1018 168h90L600 417l-36 10L170 565z" fill="#00b300"/>
      <path d="M677 326L1137 168h186l-1 27 7 3-1 19L640 459l-6-22 2-28 10-26 26-4z" fill="#005ab3"/>
      <path d="M639 395L1283 168h34L635 410z" fill="#0050a0"/>
      <path d="M639 395l8-12 8-4 10-1 9 2L1275 168h8z" fill="#00458a"/>
      <path d="M671 322L1105 168h32L685 328zM634 437L1322 195l7 4L640 441zM554 403l68-23-3 52z" fill="#0073e6"/>
      <path d="M671 322l14 6-2 36-8-2-1 18-9-2-10 1-8 4-8 12-3 15-2 27 6 4v18l-86-36v-20l65 28 3-55z" fill="#004d99"/>
      <g fill="none" stroke="#fff" stroke-opacity=".5">
        <circle cx="767.500" cy="421.500" r="225"/><circle cx="542.500" cy="421.500" r="14"/><circle cx="767.500" cy="196.500" r="14"/><circle cx="992.500" cy="421.500" r="14"/><circle cx="767.500" cy="646.500" r="14"/>
      </g>
      <path d="M225 625l29-10" stroke="#f00" stroke-width="4"/><path d="M250 610l9 4-5 6z" fill="#f00"/>
      <path d="M225 625l-26-11" stroke="#0f0" stroke-width="4"/><path d="M199 608l-10 1 5 8z" fill="#0f0"/>
      <path d="M225 625l2-38" stroke="#0080ff" stroke-width="4"/><path d="M223 591l5-12 3 12z" fill="#0080ff"/>
      <path d="M238 605l8 9M246 605l-8 9" stroke="#a00000"/><path d="M201 604l4 4 4-4M205 608v5" stroke="#0f0" fill="none"/><path d="M217 576.500h9l-9 9h9" stroke="#0080ff" fill="none"/>
    </svg>

    <div class="row snaps">
      <div class="group"><i class="grip"></i>
        <button class="it"><svg class="i"><use href="#ortho"/></svg>正交</button>
        <button class="it on"><svg class="i"><use href="#snap"/></svg>对象捕捉</button>
        <button class="it"><svg class="i"><use href="#dyn"/></svg>动态输入</button>
      </div>
      <div class="group"><i class="grip"></i>
        <button class="it"><svg class="i"><use href="#cross"/></svg>交点</button>
        <button class="it on"><svg class="i"><use href="#perp"/></svg>垂点</button>
        <button class="it on"><svg class="i"><use href="#mid"/></svg>中点</button>
        <button class="it"><svg class="i"><use href="#vertex"/></svg>顶点</button>
        <button class="it"><svg class="i"><use href="#coord"/></svg>坐标</button>
      </div>
      <div class="group offs"><i class="grip"></i>
        <label class="combo w1"><select aria-label="偏移方式"><option>不偏移</option></select></label>
        <i class="sep"></i>
        <label for="ox">X=</label><span class="spin"><input id="ox" value="0"><i></i></span><span>mm</span>
        <label for="oy" class="second">Y=</label><span class="spin"><input id="oy" value="0"><i></i></span><span>mm</span>
        <i class="sep"></i>
        <input type="checkbox" id="rot"><label for="rot" class="dark">旋转</label>
        <span class="spin big"><input aria-label="旋转角度" value="0.000"><i></i></span><span>°</span>
      </div>
    </div>
  </section>
</main>

<footer class="status">
  <span class="c1"><tt>X=8824 Y=-10061</tt></span><span class="c2">层高<tt>:2.8m</tt></span><span class="c3">底标高<tt>:20.35m</tt></span><span class="c4"><tt>1(1)</tt></span><span class="c5"></span><span class="c6"><tt>516 FPS</tt></span>
</footer>

<footer class="taskbar">
  <button class="start" aria-label="开始"><svg viewBox="0 0 16 16"><path d="M0 2.300L6.500 1.400v6.100H0zM7.300 1.300L16 0v7.500H7.300zM0 8.300h6.500v6.200L0 13.600zM7.300 8.300H16V16l-8.700-1.300z" fill="#fff"/></svg></button>
  <div class="search">
    <svg viewBox="0 0 20 20"><circle cx="10" cy="10" r="8.500" fill="none" stroke="#fff" stroke-width="2.500"/></svg>
    <input aria-label="搜索" placeholder="在这里输入你要搜索的内容">
    <svg viewBox="0 0 20 20"><path d="M7.500 2.500h5v9h-5zM4.500 9v5.500h11V9M10 15v3M7 18h6" fill="none" stroke="#a0a0a0"/></svg>
  </div>
  <button class="task" aria-label="任务视图"><svg viewBox="0 0 24 24"><path d="M7.500 5.500h10v13h-10zM4.500 7H2.500v10h2M20 7h2v10h-2" fill="none" stroke="#fff" stroke-width="1.300"/></svg></button>
  <button class="task mid" aria-label="扇形图标"><svg viewBox="0 0 24 24"><path d="M11.500 11.500H6C0 11 0 3 6 2c5-1 6 4 5.500 9.500zM12.500 11.500V6c.500-6 8.500-6 9.500 0 1 5-4 6-9.500 5.500zM12.500 12.500H18c6 .500 6 8.500 0 9.500-5 1-6-4-5.500-9.500zM11.500 12.500V18c-.500 6-8.500 6-9.500 0-1-5 4-6 9.500-5.500z" fill="#eee"/><path d="M6 8c3-1 5 1 6 4 0-3 1-5 4-6M18 16c-3 1-5-1-6-4 0 3-1 5-4 6" stroke="#081010" fill="none"/></svg></button>
  <button class="task mid ie-white" aria-label="浏览器"><svg><use href="#ie"/></svg></button>
  <button class="task mid" aria-label="消息"><svg viewBox="0 0 26 26"><path d="M17 11C13 4 2 6 1 14c0 8 11 11 16 5M15 12c-4-5-10-2-10 2 0 6 10 7 11 1-1-4-6-4-7-1 0 3 4 3 4 1M3 22c6 4 15 1 16-7" fill="none" stroke="#ddd" stroke-width="1.300"/><path d="M19 0c5 0 4 7 7 10v2H13v-2c2-3 1-10 6-10zM17 12h4l-2 2z" fill="#f0b41e"/></svg></button>
  <button class="task mid" aria-label="Edge"><svg viewBox="0 0 24 24"><path d="M2 11C4-1 22-1 22 13H8c1 7 8 7 13 4v5C12 26 2 22 4 14c1-3 3-5 5-6-1 1-2 2-2 3h8C14 4 5 6 2 11z" fill="#1683e2"/></svg></button>
  <button class="task ie-blue" aria-label="Internet Explorer"><svg><use href="#ie"/></svg></button>
  <button class="task run" aria-label="文件资源管理器"><svg viewBox="0 0 24 24"><path d="M1 3h9l1 2h12v16H1z" fill="#f7d676"/><path d="M1 7h22v4H1z" fill="#ffe9a2"/><path d="M5 13h14v9h-4v-4H9v4H5z" fill="#3aaee6"/></svg></button>
  <button class="task run" aria-label="G浏览器"><svg viewBox="0 0 24 24"><path d="M23 3c-3 3-11-1-14 5-3 7 7 12 10 5-3 1-5 0-5-3 7-1 10 6 5 11-7 5-20 0-18-10C2 2 13-1 23 3z" fill="#148de8"/><path d="M3 9c2-5 10-7 15-5" stroke="#7bd0ff" stroke-width="1.500" fill="none"/></svg></button>
  <button class="task run" aria-label="360浏览器"><svg viewBox="0 0 24 24"><circle cx="12" cy="12" r="10.500" fill="url(#gGreen)" stroke="#e7f6df" stroke-width="1.500"/><path d="M17 15c-2 4-10 3-10-3 0-7 11-6 10 1H8" fill="none" stroke="#fff" stroke-width="3"/><path d="M2 17C7 7 17 1 23 3" stroke="#d5f2b4" stroke-width="1.500" fill="none"/></svg></button>
  <button class="task run" aria-label="便笺"><svg viewBox="0 0 24 24"><rect width="24" height="24" rx="2" fill="#f79a1b"/><path d="M2 2h20v20H2z" fill="none" stroke="#ffd88a"/><path d="M4 4l13 2-1 15-13-2z" fill="#fff7dc"/><path d="M6 9l8 1M6 12l7 1M6 15l5 1" stroke="#bb6c24"/><path d="M21 3l-9 13" stroke="#7d3715" stroke-width="2.500"/></svg></button>
  <button class="task run active" aria-label="广联达"><svg><use href="#app"/></svg></button>
  <div class="tray">
    <span class="link">链接</span>
    <span class="cpu">42%<br>CPU使用</span>
    <span class="t"><svg viewBox="0 0 16 16"><path d="M2 11l6-6 6 6" fill="none" stroke="#fff" stroke-width="1.400"/></svg></span>
    <span class="t"><svg viewBox="0 0 16 16"><path d="M4.500 5.500h10v7h-10zM15 7h1v4" fill="none" stroke="#fff"/><path d="M6 7h7v4H6zM0 3h5v3L3 8 0 6zM1 0h1v3H1zM3 0h1v3H3zM2 8h1v4H2z" fill="#fff"/></svg></span>
    <span class="t"><svg viewBox="0 0 16 16"><path d="M2 14C3 7 7 3 14 3M5 14c1-5 4-8 9-8M8 14c1-3 3-5 6-5" fill="none" stroke="#ddd" stroke-width="1.300"/><circle cx="12.500" cy="13" r="1.800" fill="#fff"/></svg></span>
    <span class="t"><svg viewBox="0 0 16 16"><path d="M1 6h3l4-4v12l-4-4H1zM10 6c1 1 1 3 0 4M12 4c2 2 2 6 0 8M14 3c3 3 3 7 0 10" fill="none" stroke="#fff"/></svg></span>
    <span class="t kb"><svg viewBox="0 0 24 14"><path d="M.500 .500h23v13H.500z" fill="none" stroke="#fff"/><path d="M3 4.500h18M3 7.500h18" stroke="#fff" stroke-width="1.500" stroke-dasharray="1.500 1.500"/><path d="M6 10.500h12" stroke="#fff"/></svg></span>
    <span class="t kb zh">中</span>
    <span class="t kb"><svg class="i"><use href="#sogou"/></svg></span>
    <time>16:58<br>2018/5/17</time>
    <button class="notice" aria-label="通知"><svg viewBox="0 0 18 18"><path d="M1.500 2.500h15v11h-4l-3 3v-3h-8z" fill="none" stroke="#fff" stroke-width="1.300"/></svg></button>
    <i class="desk"></i>
  </div>
</footer>
</body>
</html>
```
FILE: styles.css
```css
* { box-sizing: border-box; }
html, body { height: 100%; }
body {
  margin: 0;
  display: flex;
  flex-direction: column;
  overflow: hidden;
  background: #f0f0f0;
  color: #000;
  font: 12px/16px "Noto Sans", "Noto Sans CJK SC", sans-serif;
}
button, select, input { font: inherit; color: inherit; }
button { border: 0; background: none; padding: 0; white-space: nowrap; }
ul { list-style: none; margin: 0; padding: 0; }
tt { font: 10px/16px "Liberation Mono", monospace; }
svg { display: block; flex: none; }
.defs { position: absolute; width: 0; height: 0; }
.i { width: 16px; height: 16px; }

/* title bar */
.titlebar { position: relative; z-index: 2; height: 23px; flex: none; display: flex; align-items: center; padding-left: 2px; gap: 4px; background: #fff; }
.titlebar h1 { margin: 0; font-size: 12px; font-weight: 400; white-space: nowrap; }
.titlebar h1 span { font: 13px/16px Roboto, "Noto Sans CJK SC", sans-serif; }
.winctl { margin-left: auto; display: flex; }
.winctl button { width: 46px; height: 20px; display: grid; place-items: center; }
.winctl svg { width: 12px; height: 12px; fill: none; stroke: #000; }
.ime { position: absolute; left: 700px; top: 3px; width: 207px; height: 24px; padding: 0 11px 0 33px; display: flex; align-items: center; justify-content: space-between; border: 1px solid #9ab7dc; background: #fff; color: #1c74c6; }
.ime b { font-size: 15px; }
.ime svg { width: 17px; height: 17px; fill: #1c74c6; }
.ime .faded { opacity: .35; }
.ime .ime-logo { position: absolute; left: -1px; top: -4px; width: 28px; height: 28px; }
.ball { position: absolute; left: 1091px; top: -30px; width: 48px; height: 48px; padding-top: 26px; border: 3px solid #c5d6c8; border-radius: 50%; background: #35c45c; box-shadow: 0 1px 3px #888; color: #fff; font-size: 11px; font-weight: 700; line-height: 15px; text-align: center; }

/* menu and tool rows */
.menubar { height: 31px; flex: none; display: flex; align-items: center; }
.menubar > button { padding: 0 5px 0 6px; }
.menubar > button:first-child { padding-left: 7px; }
.row { display: flex; gap: 3px; height: 26px; flex: none; }
.group { display: flex; align-items: center; min-width: 0; border-radius: 3px; background: linear-gradient(#fcfcfc, #f0f0f0); }
.it, .menubar > .it { display: flex; align-items: center; gap: 3px; height: 24px; padding: 0 4px; }
.menubar > .change { padding-left: 6px; }
.it:disabled { color: #838383; }
.on { background: #dceaf6; box-shadow: inset 0 0 0 1px #0078d7; }
.dd { flex: none; width: 6px; height: 0; margin-right: -1px; border: solid transparent; border-width: 3px 3px 0; border-top-color: #000; }
.dd.wide { margin-left: 4px; }
.sep { flex: none; width: 6px; height: 16px; background: linear-gradient(#bbb, #bbb) 2px 0 / 1px 100% no-repeat; }
.more { width: 10px; height: 8px; margin: 4px 6px 0 auto; align-self: flex-start; }
.grip { flex: none; width: 8px; height: 14px; background: repeating-linear-gradient(#b5b5b5 0 2px, transparent 2px 4px) 4px 0 / 2px 100% no-repeat; }
.tip { flex: 1; height: 30px; margin-left: 3px; justify-content: center; }
.tip a { color: #0b6a6a; text-decoration: none; white-space: nowrap; }
.account { width: 241px; height: 30px; gap: 8px; margin-left: 4px; }
.main-tools { height: 28px; margin-bottom: 2px; }
.files { width: 150px; padding-left: 1px; }
.files .more { margin-right: 2px; }
.general { width: 549px; }
.general .more { margin-right: 4px; }
.view { flex: 1; padding-left: 5px; }
.combo { display: grid; height: 22px; background: linear-gradient(#f0f0f0, #f0f0f0) right / 11px 100% no-repeat #fff; margin-right: 3px; }
.combo select { grid-area: 1 / 1; width: 100%; min-width: 0; border: 0; padding: 0 12px 0 3px; background: none; appearance: none; }
.combo::after { content: ""; grid-area: 1 / 1; place-self: center end; margin-right: 3px; border: solid transparent; border-width: 3px 3px 0; border-top-color: #000; pointer-events: none; }
.w1 { width: 57px; }
.w2 { width: 69px; }
.w3 { width: 41px; margin-right: 2px; }
.blank { width: 22px; height: 26px; background: #fafafa; }

/* work area */
.work { flex: 1; min-height: 0; display: grid; grid-template-columns: 166px minmax(0, 1fr); gap: 4px; }
.side { display: flex; flex-direction: column; min-height: 0; padding-bottom: 2px; }
.side h2 { display: flex; align-items: center; gap: 8px; height: 15px; margin: 0 0 2px; padding-right: 5px; background: #0052e0; color: #fff; font-size: 12px; font-weight: 400; }
.side h2 svg { width: 10px; height: 10px; fill: none; stroke: #fff; }
.side h2 svg:first-child { margin-left: auto; }
.nav { flex: none; height: 22px; width: 165px; border: 1px solid #a0a0a0; border-color: #fff #a0a0a0 #a0a0a0 #fff; background: #f0f0f0; }
.treetools { display: flex; align-items: center; gap: 7px; height: 27px; padding: 3px 0 0 7px; background: linear-gradient(#fcfcfc, #f0f0f0); }
.treetools svg { width: 16px; height: 16px; }
.treebox { flex: 1; min-height: 0; width: 163px; margin: 0 0 1px 2px; padding: 1px 2px 0 0; border: 1px solid #7f8793; border-right: 2px solid #8b929c; background: #f0f0f0; display: grid; grid-template: minmax(0, 1fr) 17px / minmax(0, 1fr) 16px; }
.tree { overflow: hidden; padding-top: 1px; background: #fff; white-space: nowrap; }
.tree ul { margin-left: 12px; border-left: 1px dotted #888; }
.tree ul li { display: flex; align-items: center; height: 16px; margin-left: 18px; border-left: 1px dotted #888; }
.tree ul li::before { content: ""; width: 10px; border-top: 1px dotted #888; }
.tree .i { margin-right: 4px; }
.node { display: flex; align-items: center; height: 16px; }
.exp { flex: none; width: 7px; height: 7px; margin: 0 8px; border: solid #999; border-width: 1px 1px 0 0; transform: rotate(45deg); }
.exp.open { border-color: #333; border-width: 0 1px 1px 0; }
.sel span { display: flex; align-items: center; background: #d4d4d4; }
.tree .book { width: 14px; margin: 0; }
.vbar, .hbar { display: flex; align-items: center; justify-content: space-between; }
.vbar { flex-direction: column; padding: 7px 0 6px; }
.vbar b { width: 15px; height: 209px; margin: auto 0 12px; background: #cdcdcd; }
.hbar { padding: 0 4px 0 8px; }
.hbar b { width: 102px; height: 15px; margin-right: auto; margin-left: 4px; background: #a6a6a6; }
.vbar i, .hbar i { width: 6px; height: 6px; border: solid #444; border-width: 2px 0 0 2px; }
.vbar .up { transform: rotate(45deg); }
.vbar .down { transform: rotate(225deg); }
.hbar .left { transform: rotate(-45deg); }
.hbar .right { transform: rotate(135deg); margin-right: 2px; }
.stage { display: flex; flex-direction: column; min-width: 0; min-height: 0; }
.bars { display: flex; flex-direction: column; gap: 2px; padding-bottom: 2px; }
.canvas { flex: 1; min-height: 0; width: 100%; background: #000; }
.cadtext { fill: #ddd; font: 16px "Liberation Sans", sans-serif; }
.cadtext .small { font-size: 14px; }

/* snap bar */
.snaps { height: 32px; padding: 1px 0 3px; }
.offs { color: #6d6d6d; padding-right: 4px; }
.offs .combo { color: #000; }
.offs .second { margin-left: 5px; }
.offs .dark { color: #000; margin: 0 4px 0 8px; }
.offs input[type="checkbox"] { appearance: none; width: 12px; height: 12px; margin: 0; border: 1px solid #999; }
.spin { display: flex; align-items: center; width: 58px; height: 23px; margin: 0 1px 0 3px; border: 1px solid #777; }
.spin.big { width: 69px; }
.spin input { flex: 1; width: 20px; min-width: 0; border: 0; padding: 0 8px 0 0; background: none; text-align: right; }
.spin i { display: grid; gap: 8px; width: 12px; }
.spin i::before, .spin i::after { content: ""; width: 0; border: solid transparent; }
.spin i::before { border-width: 0 3px 3px; border-bottom-color: #555; }
.spin i::after { border-width: 3px 3px 0; border-top-color: #555; }

/* status line */
.status { display: flex; gap: 2px; height: 21px; flex: none; }
.status span { border: 1px solid #d5d5d5; background: linear-gradient(#fff, #f3f3f3); padding: 1px; line-height: 17px; white-space: nowrap; }
.c1 { width: 148px; }
.c2 { width: 78px; }
.c3 { width: 98px; }
.c4 { width: 48px; }
.c5 { flex: 1; }
.c6 { width: 71px; }

/* task bar */
.taskbar { display: flex; height: 40px; flex: none; background: #020a0c; color: #fff; }
.start { width: 48px; display: grid; place-items: center; }
.start svg { width: 16px; height: 16px; }
.search { display: flex; align-items: center; gap: 5px; width: 344px; padding: 0 10px 0 9px; background: #333; }
.search svg { width: 22px; height: 22px; }
.search input { flex: 1; min-width: 0; border: 0; padding: 0; background: none; font-size: 14px; }
.search input::placeholder { color: #929292; opacity: 1; }
.task { width: 48px; display: grid; place-items: center; border-bottom: 2px solid transparent; }
.task.mid { width: 52px; }
.task svg { width: 24px; height: 24px; }
.task.run { background: linear-gradient(#76b9ed, #76b9ed) center bottom / 40px 2px no-repeat; border: 0; }
.task.active { background: linear-gradient(#76b9ed, #76b9ed) center bottom / 48px 2px no-repeat #343d40; }
.ie-white { color: #eee; --swoosh: #eee; }
.ie-blue { color: #3fb0ee; --swoosh: #f5c32c; }
.tray { margin-left: auto; display: flex; align-items: center; line-height: 17px; text-align: center; }
.link { width: 38px; color: #ccc; }
.cpu { width: 72px; }
.t { width: 25px; display: grid; place-items: center; }
.t svg { width: 16px; height: 16px; }
.t.kb { width: 28px; }
.t.kb svg { width: 24px; }
.t.kb .i { width: 16px; }
.tray time { width: 70px; padding-left: 8px; line-height: 18px; }
.notice { width: 54px; display: grid; place-items: center; }
.notice svg { width: 18px; height: 18px; }
.desk { width: 5px; height: 40px; border-left: 1px solid #555; }
```
